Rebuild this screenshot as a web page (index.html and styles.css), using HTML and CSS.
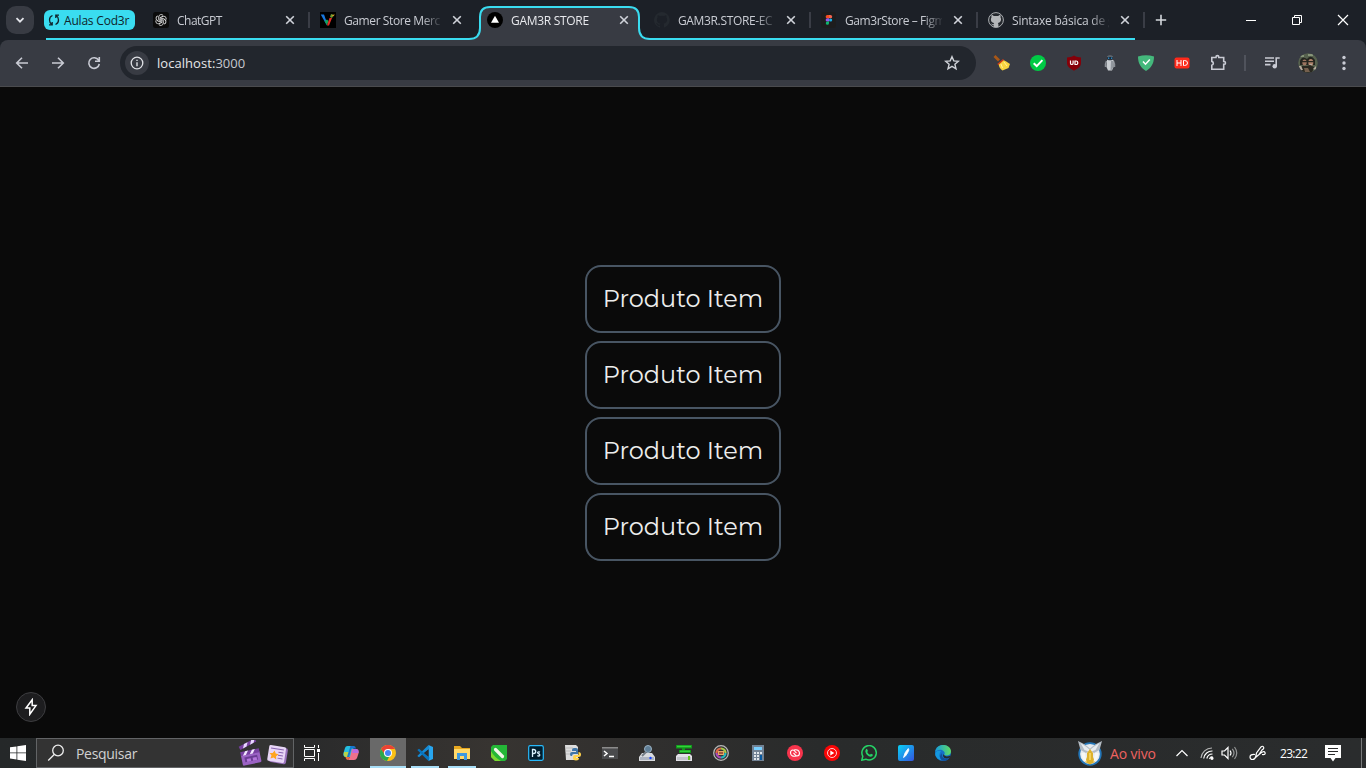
FILE: index.html
```html
<!DOCTYPE html>
<html lang="pt-BR">
<head>
<meta charset="utf-8">
<title>GAM3R STORE</title>
<link rel="stylesheet" href="styles.css">
</head>
<body>
<div class="screen">
  <header class="tabstrip">
    <button class="tab-search"><svg width="10" height="10" viewBox="0 0 10 10"><path d="M1.500 3.200 5 6.700 8.500 3.200" fill="none" stroke="#e3e5ea" stroke-width="1.800"/></svg></button>
    <div class="group-chip">
      <svg width="12" height="12" viewBox="0 0 12 12" fill="none" stroke="#10242b" stroke-width="1.300"><path d="M4.500 1.500Q1.500 2.500 1.500 6 1.500 9 3.800 10.500M1 10.800h3.200V8M7.500 10.500Q10.500 9.500 10.500 6 10.500 3 8.200 1.500M11 1.200H7.800V4"/></svg>
      <span>Aulas Cod3r</span>
    </div>
    <nav class="tabs">
      <div class="tab">
        <svg class="favicon" viewBox="0 0 16 16"><rect width="16" height="16" rx="2.500" fill="#0b0b0b"/><g fill="none" stroke="#ddd" stroke-width=".9"><g id="petals"><path d="M7.800 8.900 5.700 7.700V5a2.500 2.500 0 0 1 4.400-1.600"/><path d="M7.800 8.900 5.700 7.700V5a2.500 2.500 0 0 1 4.400-1.600" transform="rotate(60 8 8)"/><path d="M7.800 8.900 5.700 7.700V5a2.500 2.500 0 0 1 4.400-1.600" transform="rotate(120 8 8)"/></g><use href="#petals" transform="rotate(180 8 8)"/></g></svg>
        <span class="title t-gpt">ChatGPT</span><svg class="close" viewBox="0 0 10 10"><path d="m1.200 1.200 7.600 7.600m0-7.600L1.200 8.800"/></svg>
      </div>
      <div class="tab">
        <svg class="favicon" viewBox="0 0 16 16"><rect width="16" height="16" fill="#000"/><path d="M.7 2.500H4L6 8l1 5.500z" fill="#1977dc"/><path d="m4.500 9 2.500 4.500L8.500 9 7 7.500z" fill="#12a25c"/><path d="m7 13.500 2 0L12 6H9.500z" fill="#e32d23"/><path d="m10 5 1-3 3 1-2 3z" fill="#6d9832"/><path d="m12 3 3-.5-2 2z" fill="#e6a625"/></svg>
        <span class="title t-merc">Gamer Store Merc</span><svg class="close" viewBox="0 0 10 10"><path d="m1.200 1.200 7.600 7.600m0-7.600L1.200 8.800"/></svg>
      </div>
      <div class="tab active">
        <svg class="favicon" viewBox="0 0 16 16"><circle cx="8" cy="8" r="8" fill="#000"/><path d="m8 3.700 4 7H4z" fill="#fff"/></svg>
        <span class="title t-store">GAM3R STORE</span><svg class="close" viewBox="0 0 10 10"><path d="m1.200 1.200 7.600 7.600m0-7.600L1.200 8.800"/></svg>
      </div>
      <div class="tab">
        <svg class="favicon" viewBox="0 0 16 16"><path fill="#24292f" d="M8 0a8 8 0 0 0-2.500 15.600c.4.100.5-.2.500-.4v-1.500c-2.200.5-2.700-1-2.700-1-.4-.9-.9-1.200-.9-1.200-.7-.5.1-.5.1-.5.800.1 1.200.8 1.200.8.700 1.300 1.900.9 2.300.7.100-.5.300-.9.500-1.100-1.800-.2-3.600-.9-3.600-4 0-.9.300-1.600.8-2.100-.1-.2-.4-1 .1-2.100 0 0 .7-.2 2.200.8a7.500 7.500 0 0 1 4 0c1.500-1 2.200-.8 2.200-.8.500 1.100.2 1.900.1 2.100.5.600.8 1.300.8 2.100 0 3.100-1.900 3.800-3.700 4 .3.300.6.800.6 1.500v2.200c0 .2.100.5.500.4A8 8 0 0 0 8 0"/></svg>
        <span class="title t-ec">GAM3R.STORE-EC</span><svg class="close" viewBox="0 0 10 10"><path d="m1.200 1.200 7.600 7.600m0-7.600L1.200 8.800"/></svg>
      </div>
      <div class="tab">
        <svg class="favicon" viewBox="0 0 16 16"><rect width="15" height="16" rx="3" fill="#1d1d1e"/><path d="M6.300 3H8v3.300H6.300a1.600 1.600 0 0 1 0-3.300" fill="#f24e1e"/><path d="M8 3h1.500a1.600 1.600 0 0 1 0 3.300H8" fill="#f5624f"/><path d="M8 6.300H6.300a1.600 1.600 0 0 0 0 3.300H8" fill="#9854e8"/><circle cx="9.600" cy="8" r="1.600" fill="#1aafe8"/><path d="M8 9.600H6.300A1.600 1.600 0 1 0 8 11.200" fill="#0fb66d"/></svg>
        <span class="title t-figma">Gam3rStore – Figm</span><svg class="close" viewBox="0 0 10 10"><path d="m1.200 1.200 7.600 7.600m0-7.600L1.200 8.800"/></svg>
      </div>
      <div class="tab">
        <svg class="favicon" viewBox="0 0 16 16"><circle cx="8" cy="8" r="7.400" fill="#24282d" stroke="#abaeb2"/><path fill="#b4b6b9" d="M3.600 3c1 0 1.700.6 2.300 1h4.200c.6-.4 1.300-1 2.300-1 .3.900.3 1.500.1 2.200.9 1.300.8 4-.8 5.100-.5.400-1.200.5-1.900.6.500.4.600 1 .6 1.700v2.600H5.600v-2.100c-1.500.3-2-.5-2.600-1.500 1 0 1 1 2.600.7.100-.6.300-1 .6-1.400-1.800-.2-3.200-1-3.300-3.200 0-1 .1-1.700.6-2.500-.2-.7-.2-1.300.1-2.200"/></svg>
        <span class="title t-git">Sintaxe básica de g</span><svg class="close" viewBox="0 0 10 10"><path d="m1.200 1.200 7.600 7.600m0-7.600L1.200 8.800"/></svg>
      </div>
    </nav>
    <svg class="new-tab" width="12" height="12" viewBox="0 0 12 12"><path d="M6 .8v10.400M.8 6h10.400" stroke="#d4d7dd" stroke-width="1.600"/></svg>
    <div class="window-controls">
      <svg width="12" height="12" viewBox="0 0 12 12"><path d="M1 6.500h10"/></svg>
      <svg width="12" height="12" viewBox="0 0 12 12"><path d="M1.500 3.500h7v7h-7zM3.500 3.500v-2h7v7h-2"/></svg>
      <svg width="12" height="12" viewBox="0 0 12 12"><path d="m1 1 10 10M11 1 1 11" stroke-width="1.200"/></svg>
    </div>
    <svg class="tab-outline" width="1366" height="40" viewBox="0 0 1366 40"><path d="M468 40c8 0 12-4 12-11V17q0-10 10-10h140q9 0 9 10v12q0 10 11 10v1z" fill="#383b43"/><path d="M46 39H469Q480 39 480 28V17Q480 7 490 7H629Q639 7 639 17V28Q639 39 650 39H1135" fill="none" stroke="#3adcf0" stroke-width="2"/></svg>
  </header>

  <div class="toolbar">
    <div class="tool"><svg width="14" height="14" viewBox="0 0 14 14"><path d="M13 7H2M7 1.700 1.700 7 7 12.300"/></svg></div>
    <div class="tool"><svg width="14" height="14" viewBox="0 0 14 14"><path d="M1 7h11M7 1.700 12.300 7 7 12.300"/></svg></div>
    <div class="tool"><svg width="14" height="14" viewBox="0 0 14 14"><path d="M11.600 4.200A5.300 5.300 0 1 0 12.300 8M12.300 1v4.200H8"/></svg></div>
    <div class="omnibox">
      <span class="info"><svg width="14" height="14" viewBox="0 0 14 14"><circle cx="7" cy="7" r="5.800" fill="none" stroke="#dfe1e5" stroke-width="1.300"/><path d="M7 6.200V10.300M7 3.700v1.400" stroke="#dfe1e5" stroke-width="1.400"/></svg></span>
      <span class="url">localhost:<span>3000</span></span>
      <svg class="star" width="16" height="16" viewBox="0 0 16 16"><path d="m8 1.700 1.800 4.200 4.600.4-3.500 3 1.100 4.500-4-2.400-4 2.400 1.100-4.500-3.500-3 4.600-.4z" fill="none" stroke="#d0d3d9" stroke-width="1.400"/></svg>
    </div>
    <div class="extensions">
      <div class="tool color"><svg width="18" height="18" viewBox="0 0 18 18"><path d="m1.500 2 4.500 4.500" stroke="#a85717" stroke-width="2.800"/><path d="M5.500 9.500 10.500 6q3 1.500 6.500 4l-1.500 4-6 2.500Q6 14.500 5.500 9.500" fill="#f8d43f"/><path d="M4.800 10.500 10.500 5.500" stroke="#cf3b15" stroke-width="1.600"/><path d="m8 10 1.500 4M11 8l3 4" stroke="#fff09a"/></svg></div>
      <div class="tool color"><svg width="16" height="16" viewBox="0 0 16 16"><circle cx="8" cy="8" r="8" fill="#00ca45"/><path d="m3.700 8.300 3 2.800 5.700-6" fill="none" stroke="#fff" stroke-width="2"/></svg></div>
      <div class="tool color"><svg width="16" height="16" viewBox="0 0 16 16"><path d="M8 .5c2.500 1.500 4.500 1.800 7 2V8c0 4-4 6-7 7.700C5 14 1 12 1 8V2.500c2.500-.2 4.500-.5 7-2" fill="#850009"/><path d="M4.500 5.500v2.700q0 1.300 1.300 1.300t1.300-1.300V5.500M9 6h1q1.800 0 1.800 1.800T10 9.500H9z" fill="none" stroke="#fff" stroke-width="1.200"/></svg></div>
      <div class="tool color"><svg width="16" height="16" viewBox="0 0 16 16"><path d="M4.500 6q-1.500 3-1 6M11.500 6q1.500 3 1 6" fill="none" stroke="#8b9097" stroke-width="1.500"/><path d="M5 5h6.500v7L10 15.500H6L4.500 12z" fill="#c9cdd2"/><path d="M9 6h2.500v6l-2 3h-1z" fill="#91979e"/><rect x="5" y=".5" width="6" height="5" rx="2" fill="#747d85"/><rect x="5.200" y="1.800" width="5.600" height="2.900" rx="1" fill="#111a24"/><path d="M6 3.200h1.400M8.800 3.200h1.400" stroke="#3aa3e9" stroke-width="1.200"/></svg></div>
      <div class="tool color"><svg width="16" height="16" viewBox="0 0 16 16"><path d="M0 1.600Q8-1 16 1.600C16 9 13 13 8 16 3 13 0 9 0 1.600" fill="#44b87c"/><path d="m5 6.500 2.500 2.700 4.300-4.700" fill="none" stroke="#fff" stroke-width="1.500"/></svg></div>
      <div class="tool color"><svg width="16" height="16" viewBox="0 0 16 16"><rect x=".5" y="2.500" width="15" height="11" rx="2" fill="#ff291a"/><path d="M3 5v6M7 5v6M3 8h4M9.500 5.500h1q3 0 3 2.500t-3 2.500h-1z" fill="none" stroke="#fff"/></svg></div>
      <div class="tool"><svg width="18" height="18" viewBox="0 0 18 18"><path d="M2.300 3.500H6.500V3a1.400 1.400 0 0 1 2.800 0v.5h4.900V7.500h.4a1.400 1.400 0 0 1 0 2.800h-.4v5H2.300v-4A2 2 0 0 0 2.300 7.400z" transform="translate(.5)"/></svg></div>
      <i class="divider"></i>
      <div class="tool"><svg width="18" height="18" viewBox="0 0 18 18"><path d="M2 4h9M2 7.300h9M2 10.600h5.500M13.200 12.500V4h3.500"/><circle cx="11.700" cy="12.300" r="2.200" fill="#c9cbd4" stroke="none"/></svg></div>
      <div class="tool color"><svg width="20" height="20" viewBox="0 0 20 20"><clipPath id="face"><circle cx="10" cy="10" r="9.800"/></clipPath><g clip-path="url(#face)"><path fill="#56614e" d="M0 0h20v20H0z"/><path fill="#87957a" d="M2 2h4v2H2zM10 1h5v2h-5z"/><path fill="#24251f" d="M2 8q2-6 7-2 4-5 8 1v5H2z"/><ellipse cx="6.500" cy="9.500" rx="2.200" ry="3" fill="#9b745f"/><ellipse cx="12.800" cy="9.500" rx="2.500" ry="3.500" fill="#ad826b"/><path fill="#292820" d="M4 8h5v1.300H4zM10 8h6v1.300h-6zM9 13l3-1 4 2-2 6H4V13z"/><path fill="#b8aca0" d="M1 13h2l2 4H2zM15 16l3-3v4zM11.500 11h2.500v1h-2.500z"/><path fill="#75604e" d="M6 15h4l2 4H7z"/></g></svg></div>
      <div class="tool"><svg width="4" height="16" viewBox="0 0 4 16"><g fill="#c9cbd4" stroke="none"><circle cx="2" cy="2.500" r="1.700"/><circle cx="2" cy="8" r="1.700"/><circle cx="2" cy="13.500" r="1.700"/></g></svg></div>
    </div>
  </div>

  <main class="page">
    <div class="product"><span>Produto Item</span></div>
    <div class="product"><span>Produto Item</span></div>
    <div class="product"><span>Produto Item</span></div>
    <div class="product"><span>Produto Item</span></div>
    <div class="dev-badge"><svg width="16" height="18" viewBox="0 0 16 18"><path d="M9.200 1.800 3 10h3.800v6.300L13 7.600H9.200z" fill="none" stroke="#fff" stroke-width="1.500"/></svg></div>
  </main>

  <footer class="taskbar">
    <div class="start"><svg width="16" height="16" viewBox="0 0 16 16" fill="#fff"><path d="m0 2.300 6.500-.9v6.100H0zM7.300 1.300 16 0v7.500H7.300zM0 8.300h6.500v6.200L0 13.600zM7.300 8.300H16V16l-8.700-1.300z"/></svg></div>
    <div class="search">
      <svg width="18" height="18" viewBox="0 0 18 18"><circle cx="11" cy="6.500" r="5.300" fill="none" stroke="#eee" stroke-width="1.300"/><path d="m7.200 10.500-6 6" stroke="#eee" stroke-width="1.300"/></svg>
      <span>Pesquisar</span>
      <svg class="promo" width="50" height="26" viewBox="0 0 50 26"><g transform="rotate(-12 13 15)"><rect x="3" y="12" width="19" height="12" rx="1.500" fill="#9b62c4"/><path d="M3 10h19v4H3z" fill="#7740a0"/><path d="m5 14 3-4h3l-3 4zm7 0 3-4h3l-3 4z" fill="#f2e6ff"/><path d="M6 16h13v5H6z" fill="#6b3d94"/><path d="M8 18h4v3H8zM14 18h4v3h-4z" fill="#b576dc"/></g><g transform="rotate(-28 3 9)"><path d="M2 6h18v3.500H2z" fill="#7740a0"/><path d="m5 9.500 3-3.500h4L9 9.500zm8 0 3-3.500h4l-3 3.500z" fill="#e8d8ff"/></g><g transform="rotate(9 39 15)"><rect x="32" y="7" width="17" height="16" rx="2" fill="#9972bc"/><rect x="30" y="6" width="17" height="16" rx="1.500" fill="#e8d6f7"/><path d="M32 9h13M40 12h5M40 15h5M40 18h5" stroke="#8864b1"/><path d="m36 11 1.500 2.700 3 .4-2.200 2.200.6 3.200L36 18l-3 1.500.6-3.200-2.200-2.200 3-.4z" fill="#ffa51f"/></g></svg>
    </div>
    <div class="taskview"><svg width="18" height="18" viewBox="0 0 18 18" fill="none" stroke="#fff" stroke-width="1"><path d="M1.500 1v2.500h10V1M1.500 5.500h10v7h-10zM1.500 17v-2.500h10V17M15.500 1v3M15.500 9v8"/><path fill="#fff" stroke="none" d="M14 5h3v3h-3z"/></svg></div>
    <div class="apps">
      <div class="app"><svg viewBox="0 0 16 16"><path d="M4.500 1H11l-3 11H3Q-.5 12 .5 8L2 3q.5-2 2.500-2" fill="#24bee1"/><path d="M1 7h5l-1 5H3Q0 12 1 7" fill="#b5d44c"/><path d="M7.500 1H11q1.500.2 2 2.500H8.500L6 12H4z" fill="#1776cf"/><path d="M9 4h4.500q3 .5 2 4.500L14 13q-.8 2-3 2H5l2-3z" fill="#ef718b"/><path d="M10 4h4q2 1 1.500 4H9z" fill="#b96be2"/><path d="m7 12-2 3q-2 0-2.500-3z" fill="#ef6b3f"/></svg></div>
      <div class="app current"><svg viewBox="0 0 16 16"><circle cx="8" cy="8" r="8" fill="#fbc116"/><path d="M1 4a8 8 0 0 1 14 0H8L5 10z" fill="#e94335"/><path d="M1 4 5 10h5l-3 6A8 8 0 0 1 1 4" fill="#2ba84d"/><circle cx="8" cy="8" r="4" fill="#fff"/><circle cx="8" cy="8" r="3" fill="#4285f4"/></svg></div>
      <div class="app open"><svg viewBox="0 0 16 16"><path d="m11.500 0 4.500 2v12l-4.500 2z" fill="#28a6ef"/><path d="m11.500 0 1 3.500L2 12.200.3 11z" fill="#168bd5"/><path d="m11.500 16 1-3.500L2 3.800.3 5z" fill="#0874bd"/><path d="m11.500 4.500v7L7 8z" fill="#292a2b"/></svg></div>
      <div class="app open"><svg viewBox="0 0 16 16"><path d="M0 1h6l2 2h8v3H0z" fill="#e7a71f"/><path d="M0 4h16v10H0z" fill="#ffd969"/><path d="M3 8h10v7h-3v-4H6v4H3z" fill="#3c98df"/></svg></div>
      <div class="app"><svg viewBox="0 0 16 16"><path d="M2 0h14v14l-2 2H4l-4-4V2z" fill="#24b737"/><path d="M0 6q3 6 10 10H4l-4-4z" fill="#7bd82f"/><path d="m4.500 4.500 7 7" stroke="#f2f5e9" stroke-width="3.200" stroke-linecap="round"/></svg></div>
      <div class="app"><svg viewBox="0 0 16 16"><rect x=".7" y=".7" width="14.600" height="14.600" rx="1.500" fill="#001d2d" stroke="#28bafc" stroke-width="1.200"/><path d="M4.500 12V4.500h1q2.200 0 2.200 2t-2.200 2h-1M12 7.200c-2.500-1-3 .7-1.500 1.500 2.300 1 1.200 3-1.200 2" fill="none" stroke="#d9f2ff" stroke-width="1.300"/></svg></div>
      <div class="app"><svg viewBox="0 0 16 16"><path d="M0 0h11l2 2v13H1z" fill="#ddd"/><path d="M1 3h7M1 6h5M1 9h4" stroke="#bbb"/><path d="M9 3h2q2 0 2 2v4H9q-2 0-2 2H6q-1 0-1-2 0-2 2-2h4V6H7V5q0-2 2-2" fill="#3f75a7"/><path d="M13.500 7q2.500 0 2.500 2.500t-2.500 2.500H11v1h3q0 2.500-3 2.500-3 0-3-2.500 0-3 2-3h3.500z" fill="#ffd34b"/></svg></div>
      <div class="app"><svg viewBox="0 0 16 16"><path d="M0 2h16v12H0z" fill="#4a4b4d"/><path d="M0 2h16v1.500H0z" fill="#8b8b8b"/><path d="m2 6 3 2.500L2 11M7 11.500h5" fill="none" stroke="#fff" stroke-width="1.500"/></svg></div>
      <div class="app"><svg viewBox="0 0 16 16"><path d="m3 8-3 4v4h16v-4l-3-4z" fill="#d9dbdf"/><path d="M1 12h14v3H1z" fill="#aeb5c2"/><circle cx="9" cy="4" r="3.500" fill="#607f97" stroke="#9ab2c4"/><path d="M7 7 3 11" stroke="#747d86" stroke-width="2"/><circle cx="11.500" cy="13" r="1.200" fill="#1542ff"/></svg></div>
      <div class="app"><svg viewBox="0 0 16 16"><path d="m2 9-2 2v5h16v-5l-2-2z" fill="#e2e1e7"/><path d="M1 12h14v3H1z" fill="#c3c5cc"/><path d="M0 0h16v3.500H9V5h6v3H3V5h3V3.500H0z" fill="#10981b"/><path d="M1 .7h14v1.500H1zM4 5.500h10V7H4z" fill="#33d039"/><path d="M12 11h2v4h-2z" fill="#63c622"/></svg></div>
      <div class="app"><svg viewBox="0 0 16 16"><circle cx="8" cy="8" r="7.300" fill="#343434" stroke="#b9b9b9" stroke-width="1.300"/><g fill="none" stroke-width="2.200"><path d="M3.500 8A4.500 4.500 0 0 1 8 3.500" stroke="#e16848"/><path d="M8 3.500A4.500 4.500 0 0 1 12.500 8" stroke="#a7c948"/><path d="M12.500 8A4.500 4.500 0 0 1 8 12.500" stroke="#28b9bd"/><path d="M8 12.500A4.500 4.500 0 0 1 3.500 8" stroke="#ac4bb9"/></g><path d="M5 6h6v4H5z" fill="#e5a765"/><path d="M6 7h4v2H6z" fill="#a4573d"/></svg></div>
      <div class="app"><svg viewBox="0 0 16 16"><path d="M2 0h12v16H2z" fill="#728294"/><path d="M4 2h8v3H4z" fill="#79cfff"/><path d="M4 7h2v2H4zm3 0h2v2H7zm3 0h2v2h-2zM4 10h2v2H4zm3 0h2v2H7zM4 13h2v2H4zm3 0h2v2H7z" fill="#e2e7ec"/><path d="M10 10h2v5h-2z" fill="#0759a0"/></svg></div>
      <div class="app"><svg viewBox="0 0 16 16"><circle cx="8" cy="8" r="8" fill="#f7344c"/><g fill="none" stroke="#fff" stroke-width="1.100"><path d="M9 11Q4 12 3.500 8 3.500 5 6 5 7 5 9.500 8.200M7 5Q12 4 12.500 8 12.500 11 10 11 9 11 6.500 7.800"/></g></svg></div>
      <div class="app"><svg viewBox="0 0 16 16"><circle cx="8" cy="8" r="8" fill="#fb0505"/><circle cx="8" cy="8" r="4.500" fill="none" stroke="#fff" stroke-width=".8"/><path d="m6.300 5.500 4 2.500-4 2.500z" fill="#fff"/></svg></div>
      <div class="app"><svg viewBox="0 0 16 16"><path d="m.8 15.200 1-3.900A7.200 7.200 0 1 1 4.800 14.200z" fill="none" stroke="#25d366" stroke-width="1.500"/><path d="M5.200 4q.6-.5 1 .2l.8 1.700-.8 1q1 2 2.800 2.800l1-.9 2 1q-.3 2-2.300 2Q5.500 11 4.300 6.500q0-1.500.9-2.500" fill="#25d366"/></svg></div>
      <div class="app"><svg viewBox="0 0 16 16"><defs><linearGradient id="blue" x2="1" y2="1"><stop stop-color="#08d2f5"/><stop offset="1" stop-color="#3453df"/></linearGradient></defs><rect width="16" height="16" rx="2" fill="url(#blue)"/><path d="m10.300 3.500-2 2.500L7 8l-1.500 4.500 2-1.500L9.500 8l1.400-3z" fill="#fff" stroke="#fff" stroke-width=".8"/></svg></div>
      <div class="app"><svg viewBox="0 0 16 16"><defs><linearGradient id="edge"><stop stop-color="#159cdb"/><stop offset="1" stop-color="#60dc62"/></linearGradient></defs><circle cx="8" cy="8" r="8" fill="#1470c9"/><path d="M.2 7C1-2.500 15-2 16 6q0 4-4 4.500-2.500 0-3-1 1.300-1 .2-2.700C7 3.500 2 4.500.2 7" fill="url(#edge)"/><path d="M6 6q-4 5 1 9-5 0-6.700-5Q0 5 6 6" fill="#1598df"/><path d="M7 8q-1 5 4 6 2 0 4-1.700Q12 17 7 15.500q-4-4 0-7.500" fill="#104e9c"/><path d="M8.500 9q1 4 7.300 1.500l-1 2Q9 15 8 11z" fill="#262a2d"/></svg></div>
    </div>
    <div class="live">
      <svg width="26" height="26" viewBox="0 0 26 26"><circle cx="13" cy="14" r="10.800" fill="#e8ebee" stroke="#2376b8" stroke-width="1.800"/><path d="m1 1 7 3.500 5 4 5-4L25 1l-2.500 9-5.500 3-4-3-4 3-5.500-3z" fill="#b4bcc4"/><path d="m3.500 3 6 4 3.500 3 3.500-3 6-4-4 7-5.500 2L7.500 10z" fill="#e8ecef"/><path d="m13 9 3 4v4l2 5-5 2.500L8 22l2-5v-4z" fill="#ddb12a"/><path d="M12 13h2v7h-2z" fill="#f3d15a"/><path d="M4.500 13H8l1.500 9q-5-2-5-9M18 13h3.500q0 7-5 9z" fill="#f8f8f2"/></svg>
      <span>Ao vivo</span>
    </div>
    <div class="tray">
      <svg class="caret" width="14" height="8" viewBox="0 0 14 8"><path d="m1.500 7 5.500-5.500L12.500 7"/></svg>
      <svg class="wifi" width="14" height="14" viewBox="0 0 14 14"><path d="M1 12A11 11 0 0 1 12 2" opacity=".65"/><path d="M3.700 12.500A8.500 8.500 0 0 1 12.500 5M6.800 12.500A6 6 0 0 1 12.500 8M9.500 13a3.500 3.500 0 0 1 3-2.500"/><circle cx="12" cy="12.300" r="1" fill="#fff"/></svg>
      <svg class="volume" width="17" height="14" viewBox="0 0 17 14"><path d="M1 5h2.500L7 1.500v11L3.500 9H1z"/><path d="M9 4.500q2 2.500 0 5"/><path d="M11.300 2.800q3.400 4.200 0 8.400M13.500 1q4.500 6 0 12" opacity=".5"/></svg>
      <svg class="pen" width="18" height="16" viewBox="0 0 18 16"><path d="M6 9.500q-5-.5-5 2.500 0 2.500 2.500 2.500Q6 14.500 7 11M6.500 12.500 7.500 8l4.500-6Q13.500.5 14.500 2T13 5L10 9.500 6.500 12.500M10 9.500q5-4.500 6-2T13 9.500"/></svg>
      <time>23:22</time>
      <svg class="notes" width="16" height="17" viewBox="0 0 16 17"><path d="M0 0h16v13h-5.500L8 16.500 5.500 13H0z" fill="#fff" stroke="none"/><path d="M3 3.500h10M3 6.500h10M3 9.500h7" stroke="#2a2b2c" stroke-width="1"/></svg>
      <i class="peek"></i>
    </div>
  </footer>
</div>
</body>
</html>
```
FILE: styles.css
```css
* { box-sizing: border-box; }
body { margin: 0; background: #0a0a0a; font-family: "Open Sans", "Noto Sans", sans-serif; overflow: hidden; }
svg { display: block; flex: none; }
.screen { width: 1366px; height: 768px; display: flex; flex-direction: column; background: #1c2027; position: relative; }

.tabstrip { height: 40px; display: flex; align-items: center; padding-left: 6px; position: relative; flex: none; }
.tab-search { width: 28px; height: 28px; border: 0; border-radius: 10px; background: #383b43; padding: 0; display: flex; align-items: center; justify-content: center; }
.group-chip { width: 91px; height: 20px; margin-left: 10px; border-radius: 6px; background: #3adcf0; color: #10242b; display: flex; align-items: center; gap: 4px; padding-left: 4px; font-size: 12px; white-space: nowrap; letter-spacing: -.2px; }
.tabs { display: flex; margin-left: 8px; height: 40px; }
.tab { width: 167px; height: 40px; padding: 0 14px 0 10px; display: flex; align-items: center; position: relative; z-index: 1; }
.tab::after { content: ""; width: 2px; height: 16px; background: #3a3d46; position: absolute; right: 0; top: 12px; }
.tab.active::after, .tab:nth-child(2)::after { display: none; }
.favicon { width: 16px; height: 16px; }
.title { width: 97px; margin-left: 8px; padding-top: 2px; white-space: nowrap; font-size: 12px; line-height: 18px; color: #c9ccd3; -webkit-mask-image: linear-gradient(90deg, #000 78px, transparent 99px); mask-image: linear-gradient(90deg, #000 78px, transparent 99px); }
.active .title { color: #e8e9ed; }
.t-gpt { letter-spacing: -.5px; }
.t-merc { letter-spacing: -.4px; }
.t-store { letter-spacing: -.3px; }
.t-ec { letter-spacing: -.35px; }
.t-figma { letter-spacing: -.4px; }
.t-git { letter-spacing: -.2px; }
.close { width: 10px; height: 10px; margin-left: 11px; fill: none; stroke: #d0d3da; stroke-width: 1.6; }
.new-tab { margin-left: 10px; }
.window-controls { margin-left: auto; display: flex; gap: 34px; padding-right: 17px; fill: none; stroke: #fff; stroke-width: 1; }
.tab-outline { position: absolute; left: 0; top: 0; }

.toolbar { height: 47px; background: #383b43; border-bottom: 1px solid #4a4b4e; border-radius: 8px 8px 0 0; padding: 0 4px; display: flex; align-items: center; flex: none; }
.tool { width: 36px; height: 36px; display: flex; align-items: center; justify-content: center; fill: none; stroke: #c9cbd4; stroke-width: 1.6; }
.tool.color { stroke: none; stroke-width: 1; }
.omnibox { width: 856px; height: 34px; margin-left: 8px; border-radius: 17px; background: #22262d; display: flex; align-items: center; padding: 0 16px 0 5px; }
.info { width: 24px; height: 24px; border-radius: 12px; background: #383b43; display: flex; align-items: center; justify-content: center; }
.url { color: #e6e7ea; font-size: 13px; margin-left: 8px; letter-spacing: .05px; }
.url span { color: #c6c9cf; }
.star { margin-left: auto; }
.extensions { display: flex; align-items: center; margin-left: 8px; }
.divider { width: 2px; height: 16px; margin: 0 8px; background: #50535c; }

.page { height: 651px; flex: none; background: #0a0a0a; display: flex; flex-direction: column; align-items: center; justify-content: center; gap: 8px; position: relative; }
.product { width: 196px; height: 68px; border: 2px solid #485563; border-radius: 16px; display: flex; align-items: center; justify-content: center; color: #ededed; font: 400 24px/32px Montserrat, Inter, sans-serif; white-space: nowrap; }
.dev-badge { position: absolute; left: 16px; bottom: 16px; width: 30px; height: 30px; border-radius: 50%; background: #1d1d1f; border: 1px solid #3d3d40; display: flex; align-items: center; justify-content: center; }

.taskbar { height: 30px; flex: none; display: flex; align-items: center; background: linear-gradient(90deg, #252829 0, #292a2b 21%, #373431 36%, #302f2e 48%, #292b2b 60%, #2a2c2d 100%); color: #fff; }
.start { width: 36px; display: flex; justify-content: center; }
.search { width: 258px; height: 30px; border: 1px solid #626466; background: #333; display: flex; align-items: center; padding-left: 10px; color: #d1d1d1; font-size: 14px; letter-spacing: -.3px; }
.search span { margin-left: 11px; }
.promo { margin-left: auto; margin-right: 5px; }
.taskview { width: 39px; padding-left: 9px; }
.apps { display: flex; height: 30px; }
.app { width: 37px; height: 30px; padding-right: 1px; display: flex; align-items: center; justify-content: center; position: relative; }
.app svg { width: 16px; height: 16px; }
.current { background: linear-gradient(90deg, #696969 36px, transparent 36px); }
.current::after, .open::after { content: ""; position: absolute; bottom: 0; left: 4px; width: 28px; height: 2px; background: #a8def7; }
.current::after { left: 0; width: 36px; }
.live { margin-left: auto; display: flex; align-items: center; gap: 7px; color: #ef6260; font-size: 14px; white-space: nowrap; }
.live span { width: 47px; letter-spacing: -.15px; }
.tray { width: 209px; height: 30px; display: flex; align-items: center; fill: none; stroke: #fff; stroke-width: 1.2; }
.caret { margin-left: 18px; }
.wifi { margin-left: 11px; }
.volume { margin-left: 7px; }
.pen { margin-left: 11px; }
.tray time { width: 28px; margin-left: 13px; font-size: 12px; letter-spacing: -.7px; }
.notes { margin-left: 17px; }
.peek { width: 1px; height: 30px; background: #77797a; margin-left: auto; margin-right: 4px; }
```
